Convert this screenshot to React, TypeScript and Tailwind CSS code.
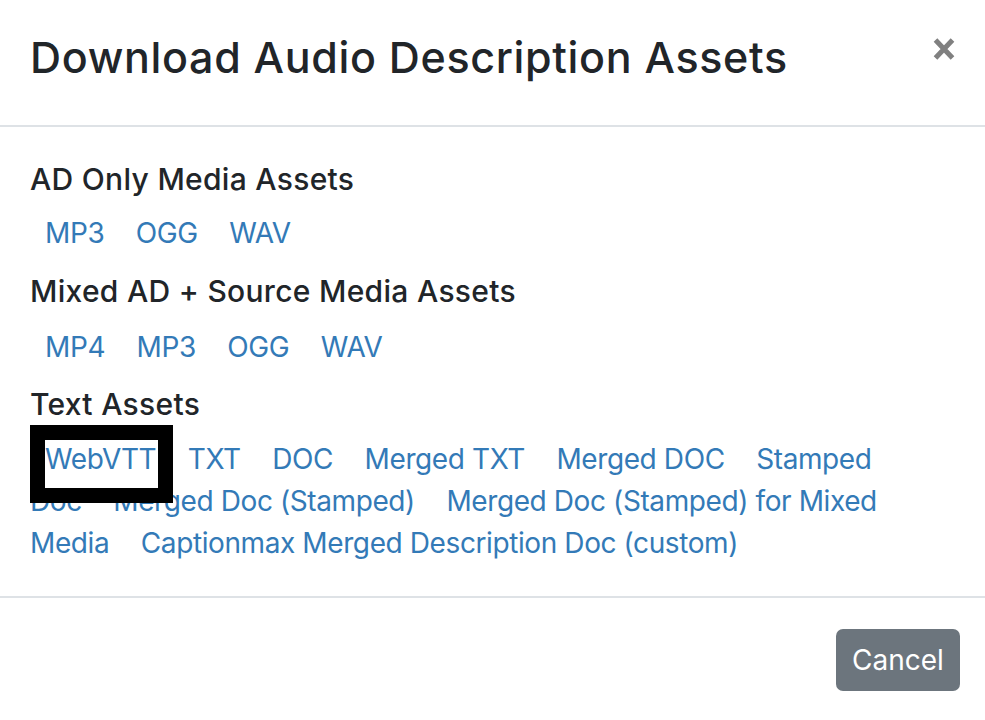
import React from "react";

const aCls = "text-[#337ab7] pl-[15px] pr-[9px] cursor-pointer";

function Links({ items }: { items: string[] }) {
  return (
    <div className="text-[28px] leading-[42px] tracking-[-0.4px]">
      {items.map((t, i) => (
        <React.Fragment key={t + i}>
          <a className={aCls}>{t}</a>
          {i < items.length - 1 ? " " : null}
        </React.Fragment>
      ))}
    </div>
  );
}

const hCls = "text-[30px] leading-[1.2] font-medium tracking-[0.3px]";

export default function App() {
  return (
    <div
      className="w-[985px] h-[720px] bg-white text-[#212529] overflow-hidden"
      style={{ fontFamily: "Inter, 'Noto Sans', sans-serif" }}
    >
      {/* header */}
      <div className="h-[127px] border-b-2 border-[#dee2e6] flex justify-between items-start pl-[30px] pr-[30px]">
        <h1 className="text-[43px] leading-[1.2] pt-[32px] font-medium tracking-[0.67px]">
          Download Audio Description Assets
        </h1>
        <button className="mt-[37px] w-[22px] h-[24px] flex items-center justify-center" aria-label="Close">
          <svg width="22" height="24" viewBox="0 0 22 24">
            <path d="M2.5 3 L19.5 21 M19.5 3 L2.5 21" stroke="#808080" strokeWidth="5" strokeLinecap="butt" />
          </svg>
        </button>
      </div>

      {/* body */}
      <div className="h-[471px] border-b-2 border-[#dee2e6] pl-[30px] pr-[30px] pt-[34px]">
        <h2 className={`${hCls} mb-[15px]`}>AD Only Media Assets</h2>
        <Links items={["MP3", "OGG", "WAV"]} />
        <h2 className={`${hCls} mt-[19px] mb-[17px]`}>Mixed AD + Source Media Assets</h2>
        <Links items={["MP4", "MP3", "OGG", "WAV"]} />
        <h2 className={`${hCls} mt-[18px] mb-[16px]`}>Text Assets</h2>
        <div className="relative mr-[20px] text-[28px] leading-[42px] tracking-[-0.4px]">
          <div className="absolute left-0 top-[-13px] w-[143px] h-[78px] border-[15px] border-black bg-white z-10" />
          <a className={`relative z-20 ${aCls}`}>WebVTT</a>{" "}
          <a className={aCls}>TXT</a>{" "}
          <a className={aCls}>DOC</a>{" "}
          <a className={aCls}>Merged TXT</a>{" "}
          <a className={aCls}>Merged DOC</a>{" "}
          <a className={aCls}>Stamped Doc</a>{" "}
          <a className={aCls}>Merged Doc (Stamped)</a>{" "}
          <a className={aCls}>Merged Doc (Stamped) for Mixed Media</a>{" "}
          <a className={aCls}>Captionmax Merged Description Doc (custom)</a>
        </div>
      </div>

      {/* footer */}
      <div className="flex justify-end pr-[25px] pt-[31px]">
        <button className="w-[124px] h-[62px] rounded-[7px] bg-[#6c757d] text-white text-[28px] leading-none">
          Cancel
        </button>
      </div>
    </div>
  );
}
